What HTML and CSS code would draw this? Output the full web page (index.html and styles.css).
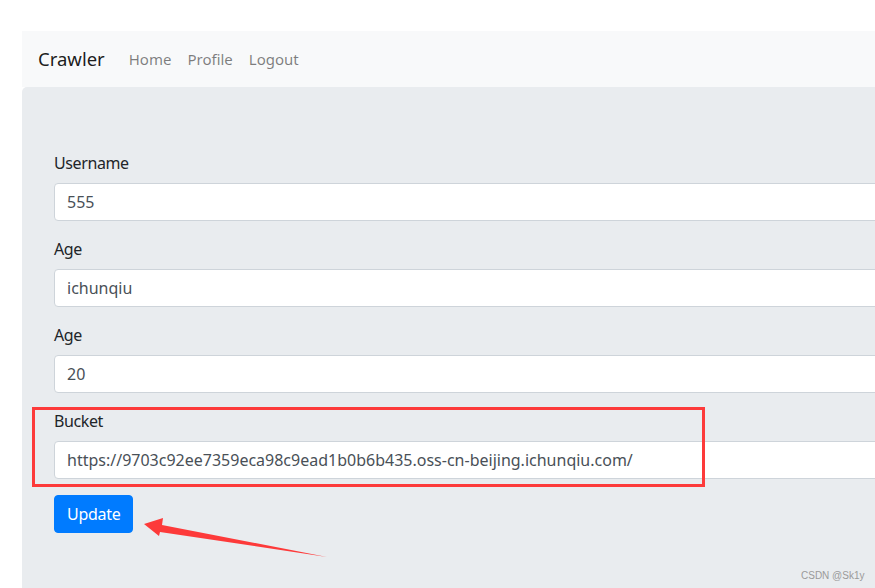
FILE: index.html
```html
<!DOCTYPE html>
<html lang="en">
<head>
    <meta charset="UTF-8">
    <title>Crawler - Profile</title>
    <link rel="stylesheet" href="styles.css">
</head>
<body>
    <div class="page">
        <nav class="navbar">
            <a class="brand" href="#">Crawler</a>
            <a class="nav-link" href="#">Home</a>
            <a class="nav-link" href="#">Profile</a>
            <a class="nav-link" href="#">Logout</a>
        </nav>
        <div class="jumbotron">
            <form>
                <div class="form-group">
                    <label for="username">Username</label>
                    <input type="text" id="username" value="555">
                </div>
                <div class="form-group">
                    <label for="age1">Age</label>
                    <input type="text" id="age1" value="ichunqiu">
                </div>
                <div class="form-group">
                    <label for="age2">Age</label>
                    <input type="text" id="age2" value="20">
                </div>
                <div class="form-group">
                    <label for="bucket">Bucket</label>
                    <input type="text" id="bucket" value="https://9703c92ee7359eca98c9ead1b0b6b435.oss-cn-beijing.ichunqiu.com/">
                </div>
                <button type="submit" class="btn">Update</button>
            </form>
        </div>
    </div>

    <div class="mark-box"></div>
    <svg class="mark-arrow" width="875" height="588" viewBox="0 0 875 588">
        <polygon points="144,524 163,518 162,525 327,557 160,532 159,536" fill="#fd3a3a"/>
    </svg>
    <div class="watermark">CSDN @Sk1y</div>
</body>
</html>
```

FILE: styles.css
```css
html, body { margin: 0; padding: 0; }
body { font-family: "Noto Sans", "Segoe UI", Arial, sans-serif; font-size: 16px; line-height: 1.5; color: #212529; background: #fff; width: 875px; height: 588px; overflow: hidden; position: relative; }
.page { margin: 31px 0 0 22px; width: 1100px; }
.navbar { display: flex; align-items: center; height: 56px; box-sizing: border-box; padding: 8px 16px; background: #f8f9fa; }
.brand { font-size: 18.5px; color: rgba(0,0,0,.9); text-decoration: none; margin-right: 16px; line-height: 30px; }
.nav-link { font-size: 15px; color: rgba(0,0,0,.5); text-decoration: none; padding: 8px; }
.jumbotron { background: #e9ecef; border-radius: 5px 0 0 0; padding: 64px 32px; height: 520px; box-sizing: border-box; }
.form-group { margin-bottom: 16px; }
label { display: block; margin-bottom: 8px; letter-spacing: -0.4px; }
input { display: block; width: 100%; box-sizing: border-box; height: 38px; padding: 6px 12px; font: inherit; color: #495057; background: #fff; border: 1px solid #ced4da; border-radius: 4px; }
.btn { font: inherit; letter-spacing: -0.3px; color: #fff; background: #007bff; border: 1px solid #007bff; border-radius: 4px; padding: 6px 12px; height: 38px; cursor: pointer; }
.mark-box { position: absolute; left: 32px; top: 407px; width: 667px; height: 74px; border: 3px solid #fd3a3a; }
.mark-arrow { position: absolute; left: 0; top: 0; }
.watermark { position: absolute; left: 801px; top: 568px; font-family: Arial, "Liberation Sans", sans-serif; font-size: 10px; color: #9a9a9a; }
```
